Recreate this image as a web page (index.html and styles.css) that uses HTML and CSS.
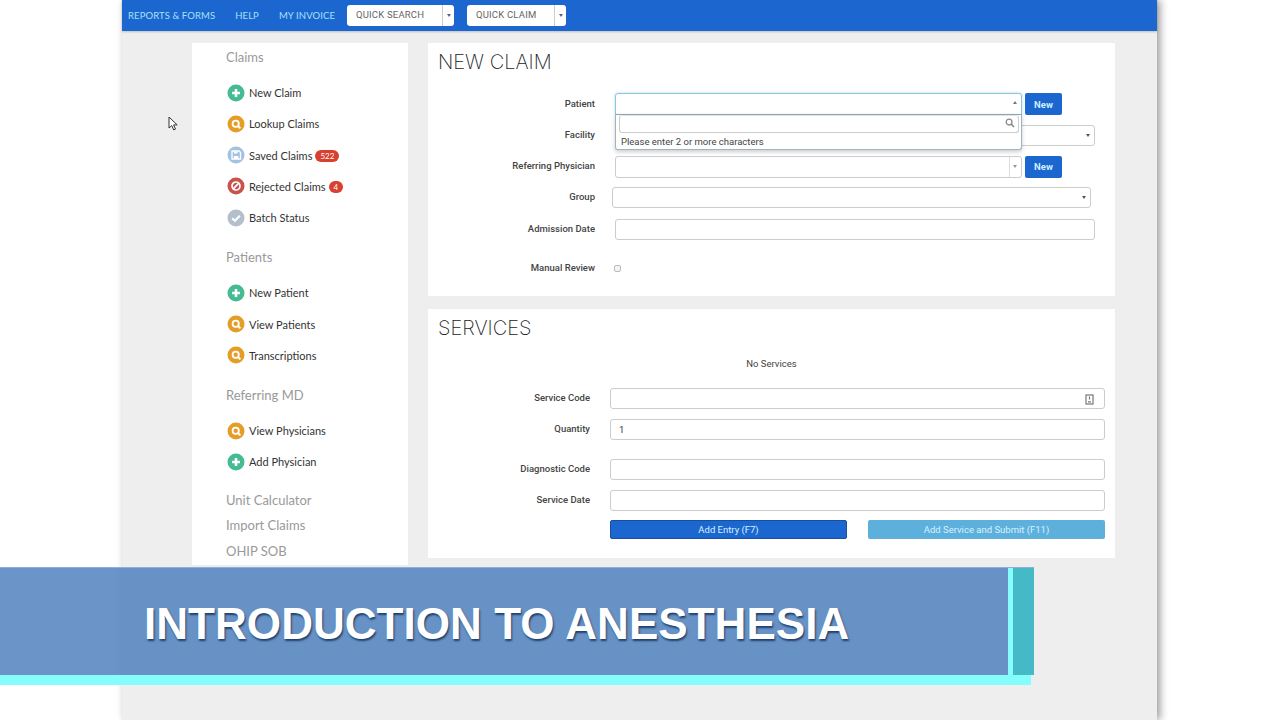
FILE: index.html
```html
<!DOCTYPE html>
<html lang="en">
<head>
  <meta charset="UTF-8" />
  <title>New Claim</title>
  <link rel="stylesheet" href="styles.css">
</head>
<body>
  <svg class="defs" width="0" height="0">
    <symbol id="i-plus" viewBox="0 0 18 18"><circle cx="9" cy="9" r="8.5" fill="#45bb92"/><path d="M9 5v8M5 9h8" stroke="#fff" stroke-width="2.6"/></symbol>
    <symbol id="i-search" viewBox="0 0 18 18"><circle cx="9" cy="9" r="8.5" fill="#e49e27"/><circle cx="8.7" cy="8.7" r="3.1" fill="none" stroke="#fff" stroke-width="1.8"/><path d="M11 11l2.4 2.4" stroke="#fff" stroke-width="1.9"/></symbol>
    <symbol id="i-save" viewBox="0 0 18 18"><circle cx="9" cy="9" r="8.5" fill="#a3c2e3"/><path d="M5 5h7l1.5 1.5V13H5z" fill="none" stroke="#fff" stroke-width="1.3"/><path d="M7 5.5h3.5v2H7zM6.8 10h4.6v3H6.8z" fill="#fff"/></symbol>
    <symbol id="i-ban" viewBox="0 0 18 18"><circle cx="9" cy="9" r="8.5" fill="#c9534c"/><circle cx="9" cy="9" r="4" fill="none" stroke="#fff" stroke-width="1.7"/><path d="M6.2 11.8l5.6-5.6" stroke="#fff" stroke-width="1.7"/></symbol>
    <symbol id="i-check" viewBox="0 0 18 18"><circle cx="9" cy="9" r="8.5" fill="#b3bfca"/><path d="M5.2 9.2l2.7 2.6 4.9-5" fill="none" stroke="#fff" stroke-width="2.2"/></symbol>
  </svg>

  <div class="app">
    <header class="topbar">
      <a class="top-link">Reports &amp; Forms</a>
      <a class="top-link">Help</a>
      <a class="top-link">My Invoice</a>
      <div class="quick quick-search"><span class="quick-text">Quick Search</span><span class="quick-caret"></span></div>
      <div class="quick quick-claim"><span class="quick-text">Quick Claim</span><span class="quick-caret"></span></div>
    </header>

    <div class="content">
      <aside class="sidebar">
        <h4 class="side-title">Claims</h4>
        <ul class="side-list">
          <li><svg class="side-icon"><use href="#i-plus"/></svg>New Claim</li>
          <li><svg class="side-icon"><use href="#i-search"/></svg>Lookup Claims</li>
          <li><svg class="side-icon"><use href="#i-save"/></svg>Saved Claims <span class="badge">522</span></li>
          <li><svg class="side-icon"><use href="#i-ban"/></svg>Rejected Claims <span class="badge">4</span></li>
          <li><svg class="side-icon"><use href="#i-check"/></svg>Batch Status</li>
        </ul>
        <h4 class="side-title">Patients</h4>
        <ul class="side-list">
          <li><svg class="side-icon"><use href="#i-plus"/></svg>New Patient</li>
          <li><svg class="side-icon"><use href="#i-search"/></svg>View Patients</li>
          <li><svg class="side-icon"><use href="#i-search"/></svg>Transcriptions</li>
        </ul>
        <h4 class="side-title">Referring MD</h4>
        <ul class="side-list">
          <li><svg class="side-icon"><use href="#i-search"/></svg>View Physicians</li>
          <li><svg class="side-icon"><use href="#i-plus"/></svg>Add Physician</li>
        </ul>
        <div class="side-links">
          <a>Unit Calculator</a>
          <a>Import Claims</a>
          <a>OHIP SOB</a>
        </div>
      </aside>

      <main class="main">
        <section class="card card-claim">
          <h2>New Claim</h2>
          <div class="form-row">
            <label>Patient</label>
            <div class="field field-open">
              <span class="caret caret-up"></span>
              <div class="dropdown">
                <div class="drop-search">
                  <svg width="10" height="10" viewBox="0 0 11 11"><circle cx="4.5" cy="4.5" r="3.2" fill="none" stroke="#888" stroke-width="1.4"/><path d="M7 7l3 3" stroke="#888" stroke-width="1.6"/></svg>
                </div>
                <p>Please enter 2 or more characters</p>
              </div>
            </div>
            <button class="btn-new">New</button>
          </div>
          <div class="form-row">
            <label>Facility</label>
            <div class="field field-wide"><span class="caret"></span></div>
          </div>
          <div class="form-row">
            <label>Referring Physician</label>
            <div class="field field-split"><span class="split-caret"><span class="caret caret-grey"></span></span></div>
            <button class="btn-new">New</button>
          </div>
          <div class="form-row">
            <label>Group</label>
            <div class="field field-group"><span class="caret"></span></div>
          </div>
          <div class="form-row">
            <label>Admission Date</label>
            <div class="field field-wide"></div>
          </div>
          <div class="form-row row-review">
            <label>Manual Review</label>
            <span class="checkbox"></span>
          </div>
        </section>

        <section class="card card-services">
          <h2>Services</h2>
          <p class="no-services">No Services</p>
          <div class="form-row">
            <label>Service Code</label>
            <div class="field field-service">
              <svg class="code-icon" width="9" height="11" viewBox="0 0 9 11"><rect x="1" y="1" width="7" height="9" fill="none" stroke="#777" stroke-width="1.2"/><path d="M4.5 2.5v3M3 7.8h3" stroke="#777" stroke-width="1.2"/></svg>
            </div>
          </div>
          <div class="form-row">
            <label>Quantity</label>
            <div class="field field-service">1</div>
          </div>
          <div class="form-row row-diag">
            <label>Diagnostic Code</label>
            <div class="field field-service"></div>
          </div>
          <div class="form-row">
            <label>Service Date</label>
            <div class="field field-service"></div>
          </div>
          <div class="form-actions">
            <button class="btn btn-entry">Add Entry (F7)</button>
            <button class="btn btn-submit">Add Service and Submit (F11)</button>
          </div>
        </section>
      </main>
    </div>
  </div>

  <svg class="cursor" width="11" height="15" viewBox="0 0 11 15"><path d="M1 1v11l2.8-2.4 1.9 4.3 1.8-.8-1.9-4.2h3.6z" fill="#fff" stroke="#333" stroke-width="1"/></svg>

  <div class="banner">
    <div class="banner-title">INTRODUCTION TO ANESTHESIA</div>
    <span class="banner-edge"></span>
  </div>
</body>
</html>
```

FILE: styles.css
```css
* {
  box-sizing: border-box;
}
html, body {
  height: 720px;
  overflow: hidden;
}
body {
  margin: 0;
  background: #fff;
  color: #333;
  font-family: 'Roboto', sans-serif;
}
.defs {
  position: absolute;
}
.app {
  width: 1035px;
  height: 720px;
  margin-left: 122px;
  background: #eee;
  box-shadow: 3px 0 8px rgba(0,0,0,0.4);
}
.topbar {
  display: flex;
  align-items: center;
  height: 31px;
  padding: 0 0 0 6px;
  background: #1c66cf;
  box-shadow: 0 1px 2px rgba(0,0,0,0.2);
}
.top-link {
  margin-right: 20px;
  font-family: 'Lato', sans-serif;
  font-size: 9.5px;
  letter-spacing: 0.1px;
  text-transform: uppercase;
  color: #a5e2f7;
}
.quick {
  display: flex;
  height: 21px;
  background: #fff;
  border-radius: 3px;
  font-size: 9.5px;
  letter-spacing: 0.2px;
  text-transform: uppercase;
  color: #666;
}
.quick-search {
  width: 107px;
  margin-left: -8px;
  margin-right: 13px;
}
.quick-claim {
  width: 99px;
}
.quick-text {
  flex: 1;
  padding: 4px 0 0 9px;
}
.quick-caret {
  position: relative;
  width: 12px;
  border-left: 1px solid #ccc;
}
.quick-caret::after {
  content: "";
  position: absolute;
  top: 9px;
  left: 4px;
  border: 2px solid transparent;
  border-top: 3px solid #666;
}
.content {
  display: flex;
  gap: 20px;
  padding: 12px 0 0 70px;
}
.sidebar {
  width: 216px;
  height: 522px;
  padding-left: 34px;
  background: #fff;
  font-family: 'Lato', sans-serif;
}
.side-title {
  height: 28px;
  margin: 0 0 6px;
  font-size: 13px;
  font-weight: 400;
  line-height: 28px;
  color: #999;
}
.side-list {
  margin: 0 0 10px;
  padding: 0;
  list-style: none;
}
.side-list li {
  display: flex;
  align-items: center;
  height: 31.25px;
  font-size: 11px;
  color: #333;
}
.side-icon {
  width: 18px;
  height: 18px;
  margin: 0 4px 0 1px;
}
.badge {
  margin: 1px 0 0 3px;
  padding: 2px 5px;
  border-radius: 7px;
  background: #d8402f;
  font-size: 8px;
  line-height: 8px;
  color: #fff;
}
.side-links {
  display: flex;
  flex-direction: column;
  margin-top: 4px;
}
.side-links a {
  height: 25.5px;
  font-size: 13px;
  line-height: 25px;
  color: #999;
}
.main {
  width: 687px;
}
.card {
  margin-bottom: 13px;
  background: #fff;
}
.card-claim {
  height: 253px;
}
.card-services {
  height: 249px;
}
.card h2 {
  height: 38px;
  margin: 0;
  padding-left: 10px;
  font-family: 'Inter', sans-serif;
  font-size: 20px;
  font-weight: 200;
  line-height: 39px;
  text-transform: uppercase;
  color: #222;
}
.card-claim h2 {
  margin-bottom: 7.5px;
}
.form-row {
  display: flex;
  align-items: center;
  height: 31.25px;
}
.form-row label {
  width: 167px;
  padding-bottom: 2px;
  font-size: 9.5px;
  font-weight: 500;
  text-align: right;
  color: #444;
}
.field {
  position: relative;
  display: flex;
  align-items: center;
  height: 21px;
  margin-left: 20px;
  padding-left: 4px;
  background: #fff;
  border: 1px solid #ccc;
  border-radius: 3px;
  font-size: 10px;
}
.field-open {
  width: 407px;
  height: 22px;
  border-color: #8fc4df;
  border-radius: 3px 3px 0 0;
  box-shadow: 0 0 3px rgba(102,175,233,0.5);
}
.field-wide {
  width: 480px;
}
.field-split {
  width: 407px;
  height: 22px;
}
.field-group {
  width: 479px;
  margin-left: 17px;
}
.caret {
  position: absolute;
  top: 8px;
  right: 4px;
  border: 2px solid transparent;
  border-top: 3px solid #555;
}
.caret-up {
  top: 5px;
  border-top: 2px solid transparent;
  border-bottom: 3px solid #777;
}
.caret-grey {
  top: 8px;
  border-top-color: #999;
}
.split-caret {
  position: absolute;
  top: 0;
  right: 0;
  bottom: 0;
  width: 12px;
  border-left: 1px solid #ddd;
}
.dropdown {
  position: absolute;
  top: 20px;
  left: -1px;
  z-index: 2;
  width: 407px;
  height: 36px;
  padding: 0 2px 0 3px;
  background: #fff;
  border: 1px solid #9fb4c0;
  border-top: 1px solid #8aa4b2;
  border-radius: 0 0 3px 3px;
  box-shadow: 0 2px 4px rgba(0,0,0,0.2);
}
.drop-search {
  display: flex;
  justify-content: flex-end;
  align-items: center;
  height: 18px;
  padding: 0 3px 3px 0;
  border: 1px solid #ccc;
  border-top-color: #e4e4e4;
  border-radius: 3px;
}
.dropdown p {
  margin: 3px 0 0 2px;
  font-size: 9.5px;
  color: #444;
}
.btn-new {
  width: 37px;
  height: 22px;
  margin-left: 3px;
  padding: 0;
  background: #1c66cf;
  border: none;
  border-radius: 2px;
  font-family: inherit;
  font-size: 9.5px;
  font-weight: 700;
  color: #cfeeff;
}
.row-review {
  margin-top: 8px;
}
.checkbox {
  width: 7px;
  height: 7px;
  margin-left: 19px;
  background: #f4f4f4;
  border: 1px solid #bbb;
  border-radius: 2px;
}
.no-services {
  height: 36px;
  margin: 0;
  font-size: 9.5px;
  line-height: 34px;
  text-align: center;
  color: #444;
}
.card-services .form-row {
  height: 31px;
}
.card-services .form-row label {
  width: 162px;
}
.field-service {
  width: 495px;
  padding-left: 8px;
  font-size: 9.5px;
}
.code-icon {
  position: absolute;
  top: 5px;
  right: 10px;
}
.card-services .row-diag {
  margin-top: 9px;
}
.form-actions {
  display: flex;
  gap: 21px;
  margin: 4px 0 0 182px;
}
.btn {
  width: 237px;
  height: 19px;
  padding: 0;
  border: none;
  border-radius: 2px;
  font-family: inherit;
  font-size: 9.5px;
  color: #d5f2ff;
}
.btn-entry {
  background: #1c66cf;
  border: 1px solid #16509f;
}
.btn-submit {
  background: #5eb0dc;
}
.cursor {
  position: absolute;
  top: 116px;
  left: 168px;
}
.banner {
  position: absolute;
  top: 567px;
  left: 0;
  width: 1034px;
  height: 108px;
  padding-right: 26px;
  background: linear-gradient(to right, rgba(80,130,190,0.85) 1008px, transparent 1008px);
  border-top: 1px solid #8fb0d3;
}
.banner::after {
  content: "";
  position: absolute;
  top: 107px;
  left: 0;
  width: 1031px;
  height: 10px;
  background: #86fdfd;
}
.banner-title {
  padding: 33px 0 0 144px;
  font-family: 'Liberation Sans', sans-serif;
  font-size: 44px;
  font-weight: 700;
  line-height: 46px;
  letter-spacing: 0.05px;
  color: #fff;
  text-shadow: 1px 2px 2px rgba(0,30,70,0.7);
}
.banner-edge {
  position: absolute;
  top: 0;
  left: 1008px;
  width: 26px;
  height: 107px;
  background: #46b9c6;
  border-left: 5px solid #86fdfd;
}
```
